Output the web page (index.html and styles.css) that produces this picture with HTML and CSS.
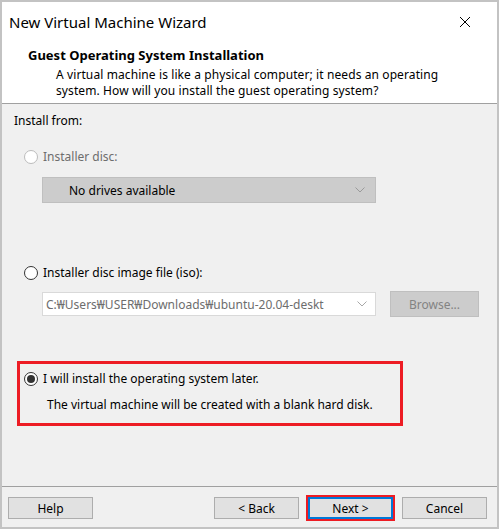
FILE: index.html
```html
<!DOCTYPE html>
<html lang="en">
<head>
    <meta charset="UTF-8">
    <meta name="viewport" content="width=device-width, initial-scale=1.0">
    <title>New Virtual Machine Wizard</title>
    <link rel="stylesheet" href="styles.css">
</head>
<body>
    <div class="window">
        <div class="header">
            <div class="titlebar">
                <span class="title">New Virtual Machine Wizard</span>
                <svg class="close" width="12" height="12" viewBox="0 0 12 12">
                    <path d="M1 1 L11 11 M11 1 L1 11" stroke="#000" stroke-width="1" fill="none"/>
                </svg>
            </div>
            <div class="heading">Guest Operating System Installation</div>
            <div class="desc">A virtual machine is like a physical computer; it needs an operating<br>system. How will you install the guest operating system?</div>
        </div>

        <div class="content">
            <div class="label">Install from:</div>

            <div class="radio-row disabled first">
                <span class="radio"></span>
                <span>Installer disc:</span>
            </div>
            <div class="select drives">
                <span>No drives available</span>
                <svg class="chevron" width="10" height="6" viewBox="0 0 10 6">
                    <path d="M0.5 0.5 L5 5 L9.5 0.5" stroke="#9a9a9a" stroke-width="1" fill="none"/>
                </svg>
            </div>

            <div class="radio-row second">
                <span class="radio"></span>
                <span>Installer disc image file (iso):</span>
            </div>
            <div class="iso-row">
                <div class="select path">
                    <span class="path-text">C:₩Users₩USER₩Downloads₩ubuntu-20.04-deskt</span>
                    <svg class="chevron" width="10" height="6" viewBox="0 0 10 6">
                        <path d="M0.5 0.5 L5 5 L9.5 0.5" stroke="#a8a8a8" stroke-width="1" fill="none"/>
                    </svg>
                </div>
                <button class="btn browse" disabled>Browse...</button>
            </div>

            <div class="later">
                <div class="radio-row">
                    <span class="radio checked"></span>
                    <span>I will install the operating system later.</span>
                </div>
                <div class="note">The virtual machine will be created with a blank hard disk.</div>
            </div>
        </div>

        <div class="footer">
            <button class="btn">Help</button>
            <button class="btn back">&lt; Back</button>
            <button class="btn next">Next &gt;</button>
            <button class="btn">Cancel</button>
        </div>
    </div>
</body>
</html>
```

FILE: styles.css
```css
body {
    margin: 0;
    font-family: 'Noto Sans', sans-serif;
    font-size: 12px;
    color: #000;
}

.window {
    width: 499px;
    height: 529px;
    box-sizing: border-box;
    border: 2px solid #c3c3c3;
    background: #f0f0f0;
    display: flex;
    flex-direction: column;
}

/* Cabecera blanca */
.header {
    background: #fff;
    height: 101px;
    border-bottom: 1px solid #a0a0a0;
}

.titlebar {
    height: 40px;
    display: flex;
    align-items: center;
    justify-content: space-between;
    padding: 0 26px 0 7px;
}

.title {
    font-size: 15px;
}

.heading {
    margin-top: 5px;
    padding-left: 26px;
    line-height: 16px;
    font-size: 13px;
    font-weight: bold;
}

.desc {
    margin-top: 4px;
    padding-left: 54px;
    line-height: 16px;
    letter-spacing: 0.1px;
}

/* Contenido */
.content {
    flex: 1;
    padding: 9px 12px 0 12px;
}

.label {
    line-height: 16px;
}

.radio-row {
    display: flex;
    align-items: center;
    gap: 5px;
    line-height: 16px;
    padding-left: 10px;
}

.radio-row.first {
    margin-top: 20px;
}

.radio-row.second {
    margin-top: 62px;
}

.radio-row.disabled {
    color: #6d6d6d;
}

.radio {
    width: 12px;
    height: 12px;
    border: 1px solid #333;
    border-radius: 50%;
    background: #fff;
    position: relative;
}

.disabled .radio {
    border-color: #bcbcbc;
}

.radio.checked::after {
    content: "";
    position: absolute;
    left: 2px;
    top: 2px;
    width: 8px;
    height: 8px;
    border-radius: 50%;
    background: #333;
}

.select {
    box-sizing: border-box;
    margin-left: 28px;
    width: 334px;
    display: flex;
    align-items: center;
    justify-content: space-between;
}

.select.drives {
    margin-top: 12px;
    height: 26px;
    background: #cccccc;
    border: 1px solid #bfbfbf;
    padding: 0 10px 0 26px;
}

.iso-row {
    margin-top: 10px;
    display: flex;
    align-items: center;
    gap: 14px;
}

.select.path {
    height: 24px;
    background: #fff;
    border: 1px solid #d9d9d9;
    padding: 0 8px 0 3px;
    color: #6d6d6d;
}

.path-text {
    white-space: nowrap;
    overflow: hidden;
}

/* Botones */
.btn {
    box-sizing: border-box;
    width: 85px;
    height: 22px;
    padding: 0;
    font-family: 'Noto Sans', sans-serif;
    font-size: 12px;
    color: #000;
    background: #e1e1e1;
    border: 1px solid #adadad;
}

.btn.browse {
    width: 89px;
    height: 26px;
    background: #cccccc;
    border-color: #bfbfbf;
    color: #838383;
}

.later {
    margin: 44px 0 0 3px;
    width: 386px;
    height: 65px;
    box-sizing: border-box;
    border: 3px solid #ed1c24;
    padding: 7px 0 0 0;
}

.later .radio-row {
    padding-left: 4px;
}

.note {
    margin-top: 10px;
    padding-left: 27px;
    line-height: 16px;
}

.footer {
    border-top: 1px solid #a0a0a0;
    padding: 10px 10px 8px 6px;
    display: flex;
    gap: 9px;
}

.btn.back {
    margin-left: auto;
}

.btn.next {
    border: 1px solid #0078d7;
    box-shadow: inset 0 0 0 1px #0078d7, 0 0 0 2px #ed1c24;
}
```
